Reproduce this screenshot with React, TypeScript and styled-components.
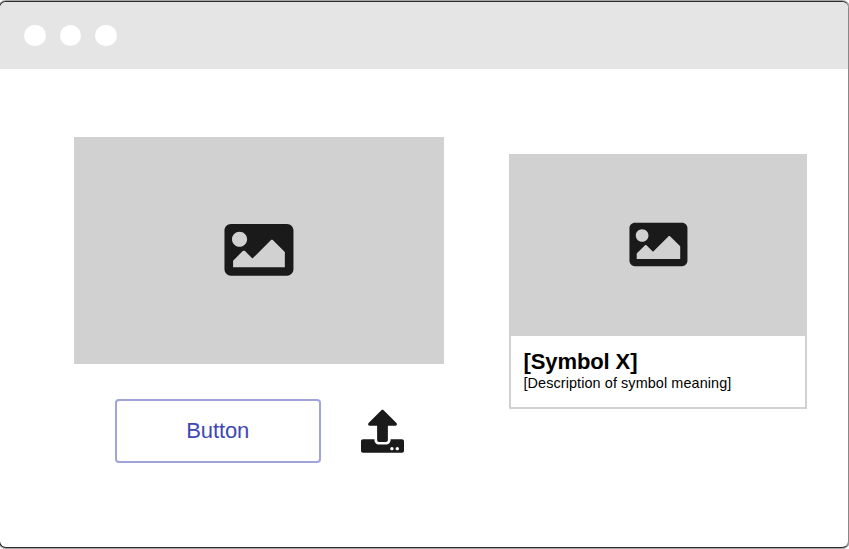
import React from "react";
import styled, { createGlobalStyle } from "styled-components";

const GlobalStyle = createGlobalStyle`
  * { box-sizing: border-box; }
  body { margin: 0; background: #fff; overflow: hidden; }
`;

const Page = styled.div`
  width: 849px;
  height: 549px;
  padding-top: 1px;
  overflow: hidden;
  background: #fff;
  font-family: "Liberation Sans", Arial, sans-serif;
`;

const BrowserFrame = styled.main`
  width: 850px;
  height: 547px;
  margin-left: -1px;
  border: 1px solid #2c2c2c;
  border-right-color: #888;
  border-radius: 7px;
  box-shadow: 0 0 0 1px rgba(0, 0, 0, 0.35);
  overflow: hidden;
  background: #fff;
`;

const TitleBar = styled.header`
  height: 67px;
  padding: 0 0 0 24px;
  display: flex;
  align-items: center;
  gap: 14px;
  background: #e5e5e5;
`;

const WindowDot = styled.span`
  width: 21.7px;
  height: 21.7px;
  border-radius: 50%;
  background: #fff;
`;

const Content = styled.div`
  display: flex;
  align-items: flex-start;
  gap: 65px;
  padding: 68px 0 0 74px;
`;

const UploadPanel = styled.section`
  width: 370px;
`;

const Placeholder = styled.div<{ $height: number }>`
  height: ${(p) => p.$height}px;
  display: flex;
  align-items: center;
  justify-content: center;
  background: #d1d1d1;
`;

const Actions = styled.div`
  display: flex;
  align-items: center;
  gap: 40px;
  padding: 35.5px 0 0 40.5px;
`;

const OutlineButton = styled.button`
  width: 206.5px;
  height: 63.5px;
  padding: 0;
  border: 2px solid #9fa5d9;
  border-radius: 4px;
  background: #fff;
  color: #3f48b5;
  font: 22px "Liberation Sans", Arial, sans-serif;
  letter-spacing: -0.1px;
`;

const SymbolCard = styled.article`
  width: 298px;
  height: 255px;
  margin-top: 17px;
  border: 2px solid #d1d1d1;
  border-top: 0;
`;

const CardText = styled.div`
  padding: 13px 12.5px;
  color: #000;
`;

const CardTitle = styled.h2`
  margin: 0;
  font-size: 22px;
  line-height: 26px;
  letter-spacing: -0.1px;
`;

const CardDescription = styled.p`
  margin: 0;
  font-size: 14.4px;
  line-height: 17px;
  letter-spacing: 0.1px;
  white-space: nowrap;
`;

const Glyph = styled.svg<{ $size: number }>`
  display: block;
  width: ${(p) => p.$size}px;
  height: ${(p) => p.$size}px;
  overflow: visible;
  fill: #1a1a1a;
`;

const ImageIcon = ({ size, shift = 4 }: { size: number; shift?: number }) => (
  <Glyph $size={size} viewBox="0 0 512 512" aria-hidden="true">
    <path
      transform={`translate(${shift} -4)`}
      d="M464 448H48c-26.51 0-48-21.49-48-48V112c0-26.51 21.49-48 48-48h416c26.51 0 48 21.49 48 48v288c0 26.51-21.49 48-48 48zM112 120c-30.928 0-56 25.072-56 56s25.072 56 56 56 56-25.072 56-56-25.072-56-56-56zM64 384h384V272l-87.515-87.515c-4.686-4.686-12.284-4.686-16.971 0L208 320l-55.515-55.515c-4.686-4.686-12.284-4.686-16.971 0L64 336v48z"
    />
  </Glyph>
);

const UploadIcon = ({ size }: { size: number }) => (
  <Glyph $size={size} viewBox="0 0 512 512" aria-hidden="true">
    <path
      transform="translate(0 8)"
      d="M296 384h-80c-13.3 0-24-10.7-24-24V192h-87.7c-17.8 0-26.7-21.5-14.1-34.1L242.3 5.7c7.5-7.5 19.8-7.5 27.3 0l152.2 152.2c12.6 12.6 3.7 34.1-14.1 34.1H320v168c0 13.3-10.7 24-24 24zm216-8v112c0 13.3-10.7 24-24 24H24c-13.3 0-24-10.7-24-24V376c0-13.3 10.7-24 24-24h136v8c0 30.9 25.1 56 56 56h80c30.9 0 56-25.1 56-56v-8h136c13.3 0 24 10.7 24 24zm-124 88c0-11-9-20-20-20s-20 9-20 20 9 20 20 20 20-9 20-20zm64 0c0-11-9-20-20-20s-20 9-20 20 9 20 20 20 20-9 20-20z"
    />
  </Glyph>
);

export default function App() {
  return (
    <Page>
      <GlobalStyle />
      <BrowserFrame>
        <TitleBar>
          <WindowDot />
          <WindowDot />
          <WindowDot />
        </TitleBar>
        <Content>
          <UploadPanel>
            <Placeholder $height={226.5}>
              <ImageIcon size={69} shift={-4} />
            </Placeholder>
            <Actions>
              <OutlineButton type="button">Button</OutlineButton>
              <UploadIcon size={43} />
            </Actions>
          </UploadPanel>
          <SymbolCard>
            <Placeholder $height={182}>
              <ImageIcon size={58} />
            </Placeholder>
            <CardText>
              <CardTitle>[Symbol X]</CardTitle>
              <CardDescription>[Description of symbol meaning]</CardDescription>
            </CardText>
          </SymbolCard>
        </Content>
      </BrowserFrame>
    </Page>
  );
}
